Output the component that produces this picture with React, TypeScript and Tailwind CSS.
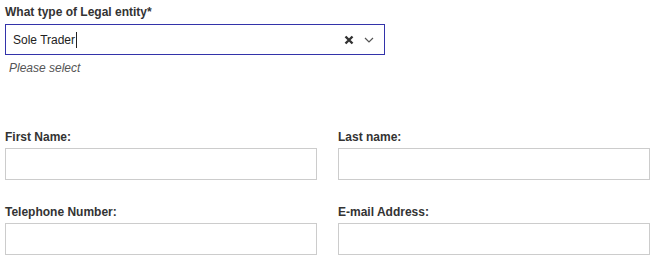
import React from "react";

function Field({ label }: { label: string }) {
  return (
    <div className="flex flex-col">
      <label className="text-[12px] font-bold text-[#333] leading-[15px] h-[15px] mb-[3px]">{label}</label>
      <div className="h-[32px] border border-[#cccccc] bg-white" />
    </div>
  );
}

export default function App() {
  return (
    <div className="w-[663px] h-[264px] bg-white pl-[5px] pr-[13px] pt-[5px] overflow-hidden" style={{ fontFamily: '"Liberation Sans", Arial, sans-serif' }}>
      <div className="text-[12px] font-bold text-[#333] leading-[15px]">What type of Legal entity*</div>
      <div className="w-[380px] h-[31px] mt-[4px] border border-[#3333aa] flex items-center pl-[7px] pr-[10px]">
        <span className="text-[12px] text-[#222]">Sole Trader</span>
        <span className="w-px h-[16px] bg-[#222] ml-px" />
        <div className="flex-1" />
        <svg width="10" height="10" viewBox="0 0 10 10" className="mr-[10px]">
          <path d="M1.5 1.5 L8.5 8.5 M8.5 1.5 L1.5 8.5" stroke="#333" strokeWidth="2.4" />
        </svg>
        <svg width="10" height="6" viewBox="0 0 10 6">
          <path d="M1 1 L5 5 L9 1" stroke="#555" strokeWidth="1.2" fill="none" />
        </svg>
      </div>
      <div className="text-[12px] italic text-[#555] pl-[4px] mt-[6px] leading-[15px]">Please select</div>
      <div className="grid grid-cols-2 gap-x-[21px] gap-y-[25px] mt-[54px]">
        <Field label="First Name:" />
        <Field label="Last name:" />
        <Field label="Telephone Number:" />
        <Field label="E-mail Address:" />
      </div>
    </div>
  );
}
